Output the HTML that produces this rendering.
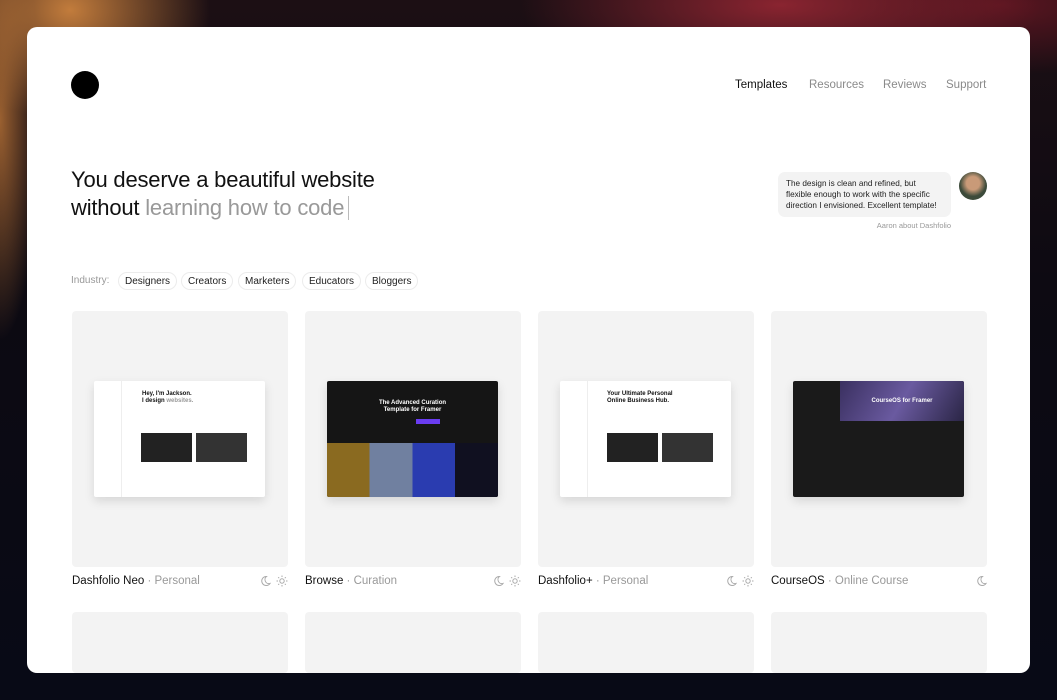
<!DOCTYPE html>
<html><head><meta charset="utf-8"><style>
*{margin:0;padding:0;box-sizing:border-box}
html,body{width:1057px;height:700px;overflow:hidden}
body{font-family:"Liberation Sans",sans-serif;
background:radial-gradient(ellipse 140px 110px at 70px 10px,#c27c3c,transparent),
radial-gradient(ellipse 40px 220px at 0px 120px,#9a6030,transparent),
radial-gradient(ellipse 260px 80px at 780px 5px,#8a2430,transparent),
radial-gradient(ellipse 220px 70px at 1000px 5px,#5a1520,transparent),
linear-gradient(180deg,#1c0f14 0%,#0d0a12 40%,#080a16 100%);position:relative}
.page{position:absolute;left:27px;top:27px;width:1003px;height:646px;background:#fff;border-radius:10px;overflow:hidden}
.logo{position:absolute;left:44px;top:44px;width:28px;height:28px;border-radius:50%;background:#000}
.nav{position:absolute;top:52px;font-size:11.5px;color:#8a8a8a}
h1{position:absolute;left:44px;top:139px;font-weight:400;font-size:22px;line-height:28px;color:#111;letter-spacing:-0.2px}
h1 span{color:#999}
h1 i{display:inline-block;width:1px;height:24px;background:#bbb;vertical-align:-5px;margin-left:4px}
.quote{position:absolute;left:751px;top:145px;width:173px;background:#f3f3f3;border-radius:7px;padding:6px 8px;font-size:8.2px;line-height:11px;color:#222}
.av{position:absolute;left:932px;top:145px;width:28px;height:28px;border-radius:50%;background:radial-gradient(circle at 50% 40%,#c99a78 30%,#3c4a3a 60%)}
.by{position:absolute;left:800px;top:194px;width:124px;text-align:right;font-size:7.5px;color:#999}
.ind{position:absolute;left:44px;top:248px;font-size:10px;color:#999}
.tag{position:absolute;top:245px;height:18px;border:1px solid #ececec;border-radius:9px;font-size:10px;color:#222;padding:0 6px;line-height:17px}
.card{position:absolute;width:216px;height:256px;background:#f3f3f3;border-radius:4px;top:284px}
.card.r2{top:585px;height:61px}
.shot{position:absolute;left:22px;top:70px;width:171px;height:116px;border-radius:2px;box-shadow:0 4px 10px rgba(0,0,0,.12);overflow:hidden}
.lbl{position:absolute;top:548px;font-size:11.5px;color:#111}
.lbl span{color:#999}
.ic{position:absolute;top:548px}
</style></head><body>
<div class="page">
<div class="logo"></div>
<div class="nav" style="left:708px;color:#111">Templates</div>
<div class="nav" style="left:782px">Resources</div>
<div class="nav" style="left:856px">Reviews</div>
<div class="nav" style="left:919px">Support</div>
<h1>You deserve a beautiful website<br>without <span>learning how to code</span><i></i></h1>
<div class="quote">The design is clean and refined, but flexible enough to work with the specific direction I envisioned. Excellent template!</div>
<div class="av"></div>
<div class="by">Aaron about Dashfolio</div>
<div class="ind">Industry:</div>
<div class="tag" style="left:91px">Designers</div>
<div class="tag" style="left:154px">Creators</div>
<div class="tag" style="left:211px">Marketers</div>
<div class="tag" style="left:275px">Educators</div>
<div class="tag" style="left:338px">Bloggers</div>

<div class="card" style="left:45px"><div class="shot" style="background:#fff">
<div style="position:absolute;left:0;top:0;width:28px;height:116px;border-right:1px solid #eee"></div>
<div style="position:absolute;left:48px;top:10px;font-size:6px;font-weight:bold;line-height:7px;color:#111">Hey, I'm Jackson.<br>I design <span style="color:#999">websites.</span></div>
<div style="position:absolute;left:47px;top:52px;width:51px;height:29px;background:#222"></div>
<div style="position:absolute;left:102px;top:52px;width:51px;height:29px;background:#333"></div>
</div></div>
<div class="card" style="left:278px"><div class="shot" style="background:#151515">
<div style="position:absolute;left:0;right:0;top:19px;text-align:center;font-size:6px;font-weight:bold;color:#fff;line-height:7px">The Advanced Curation<br>Template for Framer</div>
<div style="position:absolute;left:89px;top:38px;width:24px;height:5px;background:#6a3cf0"></div>
<div style="position:absolute;left:0;right:0;top:62px;height:54px;background:linear-gradient(90deg,#8a6a20 0 25%,#7080a0 25% 50%,#2a3cb0 50% 75%,#101020 75%)"></div>
</div></div>
<div class="card" style="left:511px"><div class="shot" style="background:#fff">
<div style="position:absolute;left:0;top:0;width:28px;height:116px;border-right:1px solid #eee"></div>
<div style="position:absolute;left:47px;top:10px;font-size:6px;font-weight:bold;line-height:7px;color:#111">Your Ultimate Personal<br>Online Business Hub.</div>
<div style="position:absolute;left:47px;top:52px;width:51px;height:29px;background:#222"></div>
<div style="position:absolute;left:102px;top:52px;width:51px;height:29px;background:#333"></div>
</div></div>
<div class="card" style="left:744px"><div class="shot" style="background:#1a1a1a">
<div style="position:absolute;left:47px;top:0;width:124px;height:40px;background:linear-gradient(120deg,#3a3060,#6a5aa0,#2a2545)"></div>
<div style="position:absolute;left:47px;top:17px;width:124px;text-align:center;font-size:6px;font-weight:bold;color:#fff">CourseOS for Framer</div>
</div></div>
<div class="lbl" style="left:45px">Dashfolio Neo <span>· Personal</span></div>
<div class="lbl" style="left:278px">Browse <span>· Curation</span></div>
<div class="lbl" style="left:511px">Dashfolio+ <span>· Personal</span></div>
<div class="lbl" style="left:744px">CourseOS <span>· Online Course</span></div>
<svg class="ic" style="left:233px" width="28" height="12" viewBox="0 0 28 12" fill="none" stroke="#aaa" stroke-width="1"><path d="M6.5 1.5a4.5 4.5 0 1 0 3.5 7 4 4 0 0 1-3.5-7z"/><circle cx="22" cy="6" r="2.2"/><path d="M22 0.5v1.5M22 10v1.5M16.5 6h1.5M26 6h1.5M18.2 2.2l1 1M24.8 8.8l1 1M18.2 9.8l1-1M24.8 3.2l1-1"/></svg>
<svg class="ic" style="left:466px" width="28" height="12" viewBox="0 0 28 12" fill="none" stroke="#aaa" stroke-width="1"><path d="M6.5 1.5a4.5 4.5 0 1 0 3.5 7 4 4 0 0 1-3.5-7z"/><circle cx="22" cy="6" r="2.2"/><path d="M22 0.5v1.5M22 10v1.5M16.5 6h1.5M26 6h1.5M18.2 2.2l1 1M24.8 8.8l1 1M18.2 9.8l1-1M24.8 3.2l1-1"/></svg>
<svg class="ic" style="left:699px" width="28" height="12" viewBox="0 0 28 12" fill="none" stroke="#aaa" stroke-width="1"><path d="M6.5 1.5a4.5 4.5 0 1 0 3.5 7 4 4 0 0 1-3.5-7z"/><circle cx="22" cy="6" r="2.2"/><path d="M22 0.5v1.5M22 10v1.5M16.5 6h1.5M26 6h1.5M18.2 2.2l1 1M24.8 8.8l1 1M18.2 9.8l1-1M24.8 3.2l1-1"/></svg>
<svg class="ic" style="left:949px" width="12" height="12" viewBox="0 0 12 12" fill="none" stroke="#aaa" stroke-width="1"><path d="M6.5 1.5a4.5 4.5 0 1 0 3.5 7 4 4 0 0 1-3.5-7z"/></svg>
<div class="card r2" style="left:45px"></div>
<div class="card r2" style="left:278px"></div>
<div class="card r2" style="left:511px"></div>
<div class="card r2" style="left:744px"></div>
</div>
</body></html>
